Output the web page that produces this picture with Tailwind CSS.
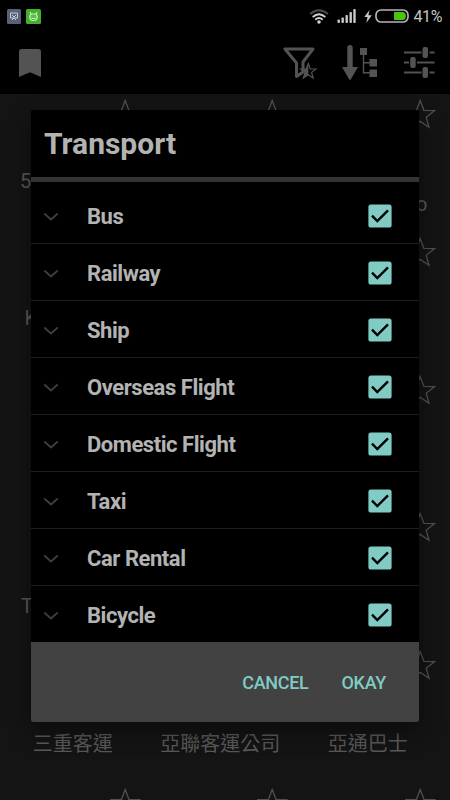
<!DOCTYPE html>
<html lang="en">
  <head>
    <meta charset="UTF-8" />
    <meta name="viewport" content="width=device-width, initial-scale=1.0" />
    <title>Transport</title>
    <script src="https://cdn.jsdelivr.net/npm/@tailwindcss/browser@4"></script>
  </head>
  <body class="bg-black">
    <div class="relative w-[450px] h-[800px] overflow-hidden bg-[#141414] font-[Roboto,'Noto_Sans_CJK_TC',sans-serif]">
      <svg class="hidden">
        <symbol id="star" viewBox="0 0 31 30">
          <path d="M15.2 1.5 L18.9 11.3 L29.5 11.7 L21.2 18.2 L24 28.2 L15.2 22.4 L6.4 28.2 L9.2 18.2 L0.9 11.7 L11.5 11.3 Z" fill="none" stroke="#505050" stroke-width="1.3" />
        </symbol>
        <symbol id="chevron" viewBox="0 0 16 10">
          <path d="M1.3 1.5 L8 7.5 L14.7 1.5" fill="none" stroke="#3f3f3f" stroke-width="1.7" />
        </symbol>
        <symbol id="check" viewBox="0 0 24 24">
          <rect x="0.4" y="0.4" width="23.2" height="23.2" rx="2.6" fill="#80cbc4" />
          <path d="M4 11.7 L9.3 17 L20 6.3" fill="none" stroke="#000" stroke-width="2.4" />
        </symbol>
      </svg>

      <!-- status bar -->
      <header class="h-[94px] bg-black">
        <div class="flex items-center h-8 pl-[7px] pr-2">
          <svg class="w-[14px] h-[15px]" viewBox="0 0 14 15">
            <rect width="14" height="15" rx="1.5" fill="#596178" />
            <path d="M3.5 4 H10.5 V9 H3.5 Z M5 6 L7 8 L9 6 M5 11 L7 9 L9 11" fill="none" stroke="#c9ccd3" stroke-width="1" />
          </svg>
          <svg class="w-[15px] h-[15px] ml-[5px]" viewBox="0 0 15 15">
            <rect width="15" height="15" rx="1.5" fill="#43b02b" />
            <path d="M4 3 L5 5 H10 L11 3 M4 6.5 Q4 5 5.5 5 H9.5 Q11 5 11 6.5 V9 Q11 11.5 7.5 11.5 Q4 11.5 4 9 Z M3 8 H4 M11 8 H12 M5.5 9 Q7.5 10 9.5 9 M6 6.6 V7.6 M9 6.6 V7.6" fill="none" stroke="#d7f3cf" stroke-width="1.1" />
          </svg>
          <svg class="w-5 h-[15px] ml-auto" viewBox="0 0 20 15">
            <g fill="none" stroke-width="1.9">
              <path d="M1 5 Q10 -2.6 19 5" stroke="#4c4c4c" />
              <path d="M3.7 8 Q10 2.4 16.3 8" stroke="#d0d0d0" />
              <path d="M6.3 10.7 Q10 7.4 13.7 10.7" stroke="#d0d0d0" />
            </g>
            <circle cx="10" cy="13" r="1.8" fill="#d0d0d0" />
          </svg>
          <svg class="w-[19px] h-[14px] ml-2" viewBox="0 0 19 14" fill="#c8c8c8">
            <rect x="0.5" y="10.5" width="2.4" height="3.5" rx="0.8" />
            <rect x="4.5" y="8.5" width="2.4" height="5.5" rx="0.8" />
            <rect x="8.5" y="6" width="2.4" height="8" rx="0.8" />
            <rect x="12.5" y="3" width="2.4" height="11" rx="0.8" />
            <rect x="16.3" y="0" width="2.4" height="14" rx="0.8" />
          </svg>
          <svg class="w-[8px] h-[13px] ml-2" viewBox="0 0 8 13" fill="#c8c8c8">
            <path d="M5.5 0 L0.3 7 H3.5 L2.3 13 L7.8 5.2 H4.4 Z" />
          </svg>
          <svg class="w-[34px] h-[14px] ml-[3px]" viewBox="0 0 34 14">
            <rect x="1" y="1" width="32" height="12" rx="5" fill="none" stroke="#b4b4b4" stroke-width="1.7" />
            <path d="M19 3 H28.5 Q31 4 31 7 Q31 10 28.5 11 H19 Z" fill="#4ac30c" />
          </svg>
          <span class="ml-[4px] pt-[2px] text-[16px] tracking-[-0.4px] leading-none text-[#c4c4c4]">41%</span>
        </div>

        <!-- toolbar -->
        <div class="flex items-center h-[61px] pl-[19px] pr-[15px]">
          <svg class="w-[22px] h-7" viewBox="0 0 22 28">
            <path d="M2.5 0 H19.5 Q22 0 22 2.5 V28 L11 23.3 L0 28 V2.5 Q0 0 2.5 0 Z" fill="#535353" />
          </svg>
          <svg class="w-[35px] h-[34px] ml-auto" viewBox="0 0 35 34">
            <path d="M2 3 H30 L20 16 V26 L13.5 30.5 V17 Z" fill="none" stroke="#535353" stroke-width="3" stroke-linejoin="round" />
            <path d="M25.3 17.5 L27.3 22.8 L33 23 L28.6 26.4 L30.2 32 L25.3 28.8 L20.4 32 L22 26.4 L17.6 23 L23.3 22.8 Z" fill="#000" stroke="#535353" stroke-width="1.2" />
            <path d="M25.3 17.5 V28.8 L20.4 32 L22 26.4 L17.6 23 L23.3 22.8 Z" fill="#535353" />
          </svg>
          <svg class="w-9 h-9 ml-[24px]" viewBox="0 0 36 36" fill="#535353">
            <path d="M5.3 2.5 Q5.3 0 8 0 Q10.7 0 10.7 2.5 V22 H16 L9 34 Q8 35.8 7 34 L0 22 H5.3 Z" />
            <path d="M21.5 9 V27.7 H28 M21.5 17.7 H28" fill="none" stroke="#535353" stroke-width="1.4" />
            <rect x="18" y="3" width="7" height="7" />
            <rect x="27.5" y="14" width="7.5" height="7.5" />
            <rect x="27.5" y="24.5" width="7.5" height="7.5" />
          </svg>
          <svg class="w-[31px] h-8 ml-[26px]" viewBox="0 0 31 32" fill="#535353">
            <path d="M0 5.5 H17.5 M25.5 5.5 H30.5 M0 15.5 H5 M13 15.5 H30.5 M0 25.5 H17.5 M25.5 25.5 H30.5" stroke="#535353" stroke-width="1.8" />
            <rect x="18.5" y="0" width="5.5" height="11" rx="2" />
            <rect x="6.2" y="10" width="5.5" height="11" rx="2" />
            <rect x="18.5" y="20" width="5.5" height="11" rx="2" />
          </svg>
        </div>
      </header>

      <!-- company grid -->
      <main class="grid grid-cols-[147.5px_147.5px_147.5px] auto-rows-[137.75px] -ml-[1px] text-[20px] leading-6 text-[#585858]">
        <div class="flex flex-col pt-[5px]">
          <svg class="w-[31px] h-[30px] ml-[110.5px] mb-[40px] shrink-0"><use href="#star" /></svg>
          <span class="pl-[21px]">5</span>
        </div>
        <div class="pt-[5px]"><svg class="w-[31px] h-[30px] ml-[110.5px]"><use href="#star" /></svg></div>
        <div class="flex flex-col pt-[5px]">
          <svg class="w-[31px] h-[30px] ml-[110.5px] mb-[63px] shrink-0"><use href="#star" /></svg>
          <span class="pl-[122px]">o</span>
        </div>

        <div class="flex flex-col pt-[5px]">
          <svg class="w-[31px] h-[30px] ml-[110.5px] mb-[39px] shrink-0"><use href="#star" /></svg>
          <span class="pl-[25.5px]">K</span>
        </div>
        <div></div>
        <div class="pt-[5px]"><svg class="w-[31px] h-[30px] ml-[110.5px]"><use href="#star" /></svg></div>

        <div></div>
        <div></div>
        <div class="pt-[5px]"><svg class="w-[31px] h-[30px] ml-[110.5px]"><use href="#star" /></svg></div>

        <div class="flex flex-col pt-[5px]">
          <svg class="w-[31px] h-[30px] ml-[110.5px] mb-[52px] shrink-0"><use href="#star" /></svg>
          <span class="pl-[22px]">T</span>
        </div>
        <div></div>
        <div class="pt-[5px]"><svg class="w-[31px] h-[30px] ml-[110.5px]"><use href="#star" /></svg></div>

        <div class="flex flex-col pt-[5px]">
          <svg class="w-[31px] h-[30px] ml-[110.5px] mb-[52px] shrink-0"><use href="#star" /></svg>
          <span class="text-center">三重客運</span>
        </div>
        <div class="flex flex-col pt-[5px]">
          <svg class="w-[31px] h-[30px] ml-[110.5px] mb-[52px] shrink-0"><use href="#star" /></svg>
          <span class="text-center">亞聯客運公司</span>
        </div>
        <div class="flex flex-col pt-[5px]">
          <svg class="w-[31px] h-[30px] ml-[110.5px] mb-[52px] shrink-0"><use href="#star" /></svg>
          <span class="text-center">亞通巴士</span>
        </div>

        <div class="pt-[5px]"><svg class="w-[31px] h-[30px] ml-[110.5px]"><use href="#star" /></svg></div>
        <div class="pt-[5px]"><svg class="w-[31px] h-[30px] ml-[110.5px]"><use href="#star" /></svg></div>
        <div class="pt-[5px]"><svg class="w-[31px] h-[30px] ml-[110.5px]"><use href="#star" /></svg></div>
      </main>

      <!-- dialog -->
      <div class="absolute left-[31px] top-[109.5px] w-[388px] h-[612.5px] flex flex-col rounded-[2.5px] overflow-hidden bg-black text-[#b3b3b3] font-bold shadow-[0_9px_22px_rgba(0,0,0,0.45)]">
        <h1 class="h-[67.5px] pl-[13px] pt-px flex items-center text-[30px] leading-none">Transport</h1>
        <div class="h-[4.5px] bg-[#333] mb-[6px]"></div>
        <ul class="text-[22px] leading-none tracking-[-0.45px] divide-y divide-[#1d1d1d]">
          <li class="flex items-center h-[56.9px] pt-[2px] pl-3 pr-[27px]">
            <svg class="w-4 h-[10px] mt-[2px] mr-[28px]"><use href="#chevron" /></svg>
            <span class="pt-[2px]">Bus</span>
            <svg class="w-6 h-6 ml-auto"><use href="#check" /></svg>
          </li>
          <li class="flex items-center h-[56.9px] pt-[2px] pl-3 pr-[27px]">
            <svg class="w-4 h-[10px] mt-[2px] mr-[28px]"><use href="#chevron" /></svg>
            <span class="pt-[2px]">Railway</span>
            <svg class="w-6 h-6 ml-auto"><use href="#check" /></svg>
          </li>
          <li class="flex items-center h-[56.9px] pt-[2px] pl-3 pr-[27px]">
            <svg class="w-4 h-[10px] mt-[2px] mr-[28px]"><use href="#chevron" /></svg>
            <span class="pt-[2px]">Ship</span>
            <svg class="w-6 h-6 ml-auto"><use href="#check" /></svg>
          </li>
          <li class="flex items-center h-[56.9px] pt-[2px] pl-3 pr-[27px]">
            <svg class="w-4 h-[10px] mt-[2px] mr-[28px]"><use href="#chevron" /></svg>
            <span class="pt-[2px]">Overseas Flight</span>
            <svg class="w-6 h-6 ml-auto"><use href="#check" /></svg>
          </li>
          <li class="flex items-center h-[56.9px] pt-[2px] pl-3 pr-[27px]">
            <svg class="w-4 h-[10px] mt-[2px] mr-[28px]"><use href="#chevron" /></svg>
            <span class="pt-[2px]">Domestic Flight</span>
            <svg class="w-6 h-6 ml-auto"><use href="#check" /></svg>
          </li>
          <li class="flex items-center h-[56.9px] pt-[2px] pl-3 pr-[27px]">
            <svg class="w-4 h-[10px] mt-[2px] mr-[28px]"><use href="#chevron" /></svg>
            <span class="pt-[2px]">Taxi</span>
            <svg class="w-6 h-6 ml-auto"><use href="#check" /></svg>
          </li>
          <li class="flex items-center h-[56.9px] pt-[2px] pl-3 pr-[27px]">
            <svg class="w-4 h-[10px] mt-[2px] mr-[28px]"><use href="#chevron" /></svg>
            <span class="pt-[2px]">Car Rental</span>
            <svg class="w-6 h-6 ml-auto"><use href="#check" /></svg>
          </li>
          <li class="flex items-center h-[56px] pt-[2px] pl-3 pr-[27px]">
            <svg class="w-4 h-[10px] mt-[2px] mr-[28px]"><use href="#chevron" /></svg>
            <span class="pt-[2px]">Bicycle</span>
            <svg class="w-6 h-6 ml-auto"><use href="#check" /></svg>
          </li>
        </ul>
        <div class="flex-1 flex items-center justify-end gap-[33px] pt-[2px] pr-[33px] bg-[#424242] text-[#80cbc4] text-[18px] tracking-[-0.3px] font-medium">
          <button>CANCEL</button>
          <button>OKAY</button>
        </div>
      </div>
    </div>
  </body>
</html>
